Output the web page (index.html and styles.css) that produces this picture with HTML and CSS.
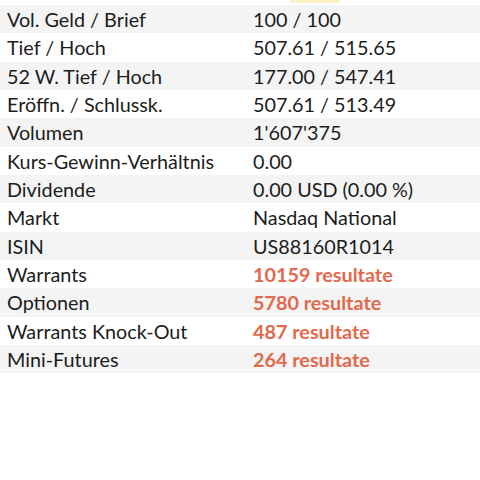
FILE: index.html
```html
<!DOCTYPE html>
<html lang="de">
<head>
<meta charset="utf-8">
<link rel="stylesheet" href="styles.css">
</head>
<body>
<div class="page">
  <div class="peek"></div>
  <div class="table">
    <div class="row alt"><span class="label">Vol. Geld / Brief</span><span class="value">100 / 100</span></div>
    <div class="row"><span class="label">Tief / Hoch</span><span class="value">507.61 / 515.65</span></div>
    <div class="row alt"><span class="label">52 W. Tief / Hoch</span><span class="value">177.00 / 547.41</span></div>
    <div class="row"><span class="label">Eröffn. / Schlussk.</span><span class="value">507.61 / 513.49</span></div>
    <div class="row alt"><span class="label">Volumen</span><span class="value">1'607'375</span></div>
    <div class="row"><span class="label">Kurs-Gewinn-Verhältnis</span><span class="value">0.00</span></div>
    <div class="row alt"><span class="label">Dividende</span><span class="value">0.00 USD (0.00 %)</span></div>
    <div class="row"><span class="label">Markt</span><span class="value">Nasdaq National</span></div>
    <div class="row alt"><span class="label">ISIN</span><span class="value">US88160R1014</span></div>
    <div class="row"><span class="label">Warrants</span><span class="value link">10159 resultate</span></div>
    <div class="row alt"><span class="label">Optionen</span><span class="value link">5780 resultate</span></div>
    <div class="row"><span class="label">Warrants Knock-Out</span><span class="value link">487 resultate</span></div>
    <div class="row alt"><span class="label">Mini-Futures</span><span class="value link">264 resultate</span></div>
  </div>
</div>
</body>
</html>
```
FILE: styles.css
```css
html, body {
  margin: 0;
  padding: 0;
  background: #ffffff;
}
.page {
  position: relative;
  width: 480px;
  height: 480px;
  font-family: Lato, "Noto Sans", sans-serif;
  color: #1c1c1c;
}
.peek {
  position: absolute;
  left: 290px;
  top: 0;
  width: 50px;
  height: 3px;
  background: #fcf0c4;
  border-radius: 0 0 6px 6px;
}
.table {
  padding-top: 5px;
  display: flex;
  flex-direction: column;
}
.row {
  display: grid;
  grid-template-columns: 246px 1fr;
  align-items: center;
  height: 28.33px;
  padding-left: 7px;
  font-size: 19.8px;
  background: #ffffff;
}
.row.alt {
  background: #f4f4f4;
}
.label, .value {
  white-space: nowrap;
}
.value.link {
  color: #e2694b;
  font-weight: 700;
}
```
